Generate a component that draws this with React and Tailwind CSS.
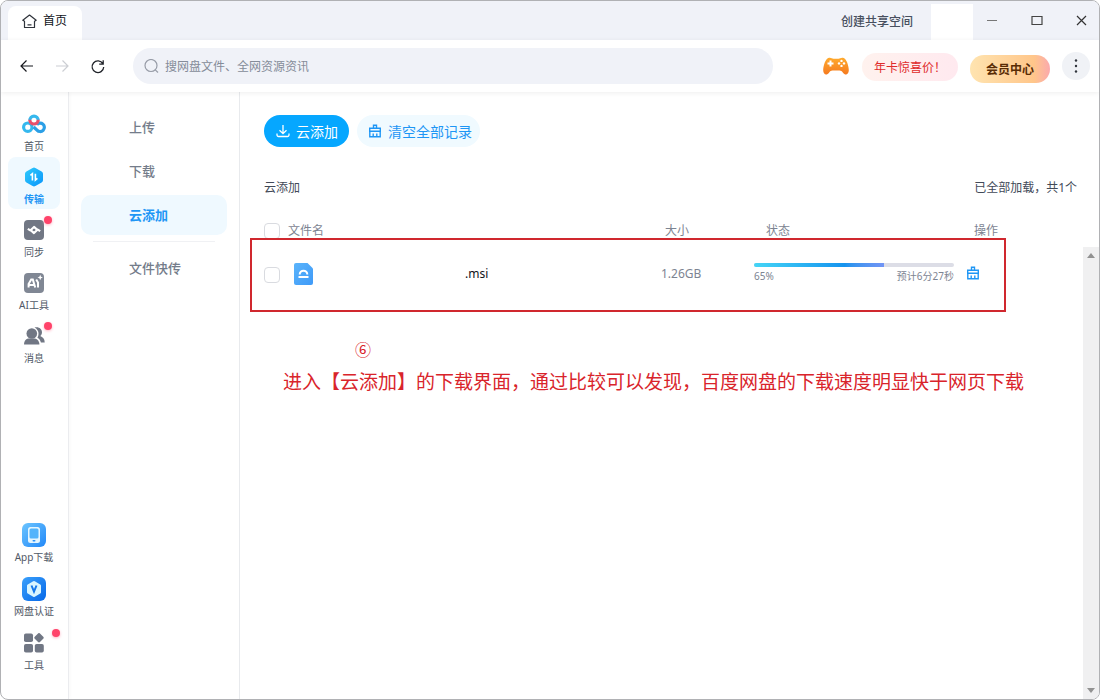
import React, { useState } from 'react';
import clsx from 'clsx';

const CloudLogo = () => (
  <svg width="24" height="20" viewBox="0 0 24 20" fill="none" strokeWidth="3.2">
    <circle cx="5.8" cy="13.2" r="4.2" stroke="#35b8ee" />
    <path d="M14.8 10.8A4.2 4.2 0 1 1 15 16.100L11.600 13" stroke="#2b9fe6" />
    <path d="M7.800 6.300A4.200 4.200 0 0 1 16.200 6.300" stroke="#35b8ee" />
    <path d="M7.800 5.800A4.200 4.200 0 1 0 16.200 5.800" stroke="#e8506c" />
  </svg>
);

const TransferIcon = () => (
  <svg width="20" height="20" viewBox="0 0 20 20" fill="none">
    <defs>
      <linearGradient id="hex" x1="0" y1="0" x2="1" y2="1"><stop stopColor="#2fcbfb" /><stop offset="1" stopColor="#0a95fb" /></linearGradient>
    </defs>
    <path d="M8.6.9a2.8 2.8 0 0 1 2.8 0l6.2 3.5A2.6 2.6 0 0 1 19 6.7v6.6a2.6 2.6 0 0 1-1.4 2.3l-6.2 3.5a2.8 2.8 0 0 1-2.8 0l-6.2-3.5A2.6 2.6 0 0 1 1 13.3V6.7a2.6 2.6 0 0 1 1.4-2.3z" fill="url(#hex)" />
    <path d="M6.400 8.300 8.400 6.700V13.400M11.400 6.700V13l2-1.600" stroke="#fff" strokeWidth="1.6" />
  </svg>
);

const SyncIcon = () => (
  <svg width="20" height="20" viewBox="0 0 20 20" fill="none">
    <rect width="20" height="20" rx="4" fill="#717784" />
    <path d="M3.800 8.800 6.300 10.400 10 6.900l3.300 3M16.200 11.200l-2.500-1.600L10 13.100l-3.300-3" stroke="#fff" strokeWidth="2.100" strokeLinejoin="round" />
  </svg>
);

const AiIcon = () => (
  <svg width="20" height="20" viewBox="0 0 20 20" fill="none">
    <rect width="20" height="20" rx="4" fill="#808794" />
    <path d="M4.600 14.500V11L7.200 6.500h1.600l2.400 8M5.500 12h5M12.200 6.500l1.800 3v5" stroke="#fff" strokeWidth="2" />
    <path d="m16.200 1.800.8 1.900 1.900.8-1.900.8-.8 1.900-.8-1.900-1.900-.8 1.900-.8z" fill="#fff" />
  </svg>
);

const PeopleIcon = () => (
  <svg width="22" height="20" viewBox="0 0 22 20" fill="#717784">
    <circle cx="8.800" cy="7.500" r="5.300" />
    <path d="M1 18.500c0-4 2.600-6 4.600-6h5.800c2 0 5 2 5 6z" />
    <path d="M11.500 1.600c4-1.300 7.500 1.100 7.500 4.600 0 1.800-.8 3-1.800 3.900 2.600 1 4.500 3 4.500 6.400h-3.800c-.5-2.200-1.800-3.800-3.500-4.700 1.600-2.500 2.200-7.500-2.900-10.200z" />
  </svg>
);

const PhoneIcon = () => (
  <svg width="24" height="24" viewBox="0 0 24 24" fill="none">
    <defs>
      <linearGradient id="phone" x1="0" y1="0" x2="1" y2="1"><stop stopColor="#6cc5ff" /><stop offset="1" stopColor="#2288f8" /></linearGradient>
    </defs>
    <rect width="24" height="24" rx="6" fill="url(#phone)" />
    <rect x="6" y="4" width="12" height="16" rx="2.5" fill="#e4f6ff" />
    <rect x="7.5" y="5.5" width="9" height="10" rx="1.500" fill="#52b4fb" />
    <rect x="10.500" y="17" width="3" height="1.500" rx=".7" fill="#2d91f8" />
  </svg>
);

const VerifyIcon = () => (
  <svg width="24" height="24" viewBox="0 0 24 24" fill="none">
    <defs>
      <linearGradient id="verify" x1="0" y1="0" x2="1" y2="1"><stop stopColor="#3aa0fb" /><stop offset="1" stopColor="#0668e8" /></linearGradient>
    </defs>
    <rect width="24" height="24" rx="6" fill="url(#verify)" />
    <path d="m12 5.500 5.500 3.200v6.600L12 18.500l-5.500-3.200V8.700z" fill="#d8f5ff" stroke="#d8f5ff" strokeWidth="3" strokeLinejoin="round" />
    <path d="m9.500 8.500 2.500 6.200 2.500-6.200" stroke="#1477ea" strokeWidth="2" />
  </svg>
);

const ToolsIcon = () => (
  <svg width="20" height="20" viewBox="0 0 20 20" fill="#717784">
    <rect x="0" y=".5" width="9" height="8.500" rx="1.800" />
    <rect x="11.300" y="1" width="7.400" height="7.400" rx="1.400" transform="rotate(45 15 4.700)" />
    <rect x="0" y="11" width="9" height="8.500" rx="1.800" />
    <rect x="10.800" y="11" width="9" height="8.500" rx="1.800" />
  </svg>
);

const GamepadIcon = () => (
  <svg width="26" height="18" viewBox="0 0 26 18" fill="none">
    <defs>
      <linearGradient id="pad" x1="0" y1="0" x2="0" y2="1"><stop stopColor="#ffab2e" /><stop offset="1" stopColor="#f57a20" /></linearGradient>
    </defs>
    <path d="M6 .8C8 .3 9 1.700 10.500 1.700h5C17 1.700 18 .3 20 .8c3.500.7 5.600 7.500 5.800 12.200.2 5-3.800 5.700-5.800 2.700-1-1.500-2-2.200-3.500-2.200h-7C8 13.500 7 14.200 6 15.700c-2 3-6 2.300-5.800-2.700C.4 8.300 2.500 1.500 6 .8z" fill="url(#pad)" />
    <path d="M7.500 3.500v6M4.500 6.500h6" stroke="#fff" strokeWidth="2" />
    <g fill="#fff"><circle cx="18.500" cy="3.900" r="1.200" /><circle cx="18.500" cy="8.900" r="1.200" /><circle cx="16" cy="6.400" r="1.200" /><circle cx="21" cy="6.400" r="1.200" /></g>
  </svg>
);

const BroomIcon = () => (
  <svg width="14" height="14" viewBox="0 0 14 14" fill="none" stroke="currentColor" strokeWidth="1.400">
    <path d="M5.500 4V1.200h3V4M1.700 7.300V4.200h10.600v3.100M1 7.300h12M1.800 7.300v5.400h10.400V7.300M5.200 9.500v3M8.800 9.500v3" />
  </svg>
);

const FileIcon = () => (
  <svg width="19" height="22" viewBox="0 0 19 22" fill="none">
    <defs>
      <linearGradient id="file" x1="0" y1="0" x2="1" y2="1"><stop stopColor="#5ab4fb" /><stop offset="1" stopColor="#3f9af8" /></linearGradient>
    </defs>
    <path d="M2 0h11.500L19 5.500V20a2 2 0 0 1-2 2H2a2 2 0 0 1-2-2V2a2 2 0 0 1 2-2z" fill="url(#file)" />
    <path d="M5.700 11.500a3.800 3.800 0 0 1 7.600 0" stroke="#fff" strokeWidth="2" />
    <path d="M4.500 14h10" stroke="#fff" strokeWidth="2" />
  </svg>
);

const mainItems = [
  { label: '首页', icon: CloudLogo },
  { label: '传输', icon: TransferIcon, active: true },
  { label: '同步', icon: SyncIcon, dot: true },
  { label: 'AI工具', icon: AiIcon },
  { label: '消息', icon: PeopleIcon, dot: true },
];

const bottomItems = [
  { label: 'App下载', icon: PhoneIcon },
  { label: '网盘认证', icon: VerifyIcon },
  { label: '工具', icon: ToolsIcon, dot: true, wide: true },
];

const tasks = [{ id: 1, name: '.msi', size: '1.26GB', progress: 65, eta: '预计6分27秒' }];

function SideItem({ item }) {
  const Icon = item.icon;
  return (
    <button className={clsx('relative flex h-[52px] w-[52px] flex-col items-center rounded-lg pt-2 text-[10px] leading-4 whitespace-nowrap', item.active ? 'bg-[#eff9ff] font-bold text-[#1e96f5]' : 'text-[#505866]')}>
      <span className="flex h-6 items-center"><Icon /></span>
      <span className="mt-0.5">{item.label}</span>
      {item.dot && <i className={clsx('absolute top-1.5 h-2 w-2 rounded-full bg-[#ff436a] shadow-[0_1px_3px_#ffb3c3]', item.wide ? 'right-0' : 'right-2')} />}
    </button>
  );
}

function TitleBar() {
  return (
    <header className="flex h-[39px] shrink-0 items-stretch bg-[#f0f2f8] pl-[7px] text-xs">
      <button className="mt-[5px] flex w-[74px] items-center gap-1.5 rounded-t-lg bg-white pb-1 pl-3.5 text-[#10131a]">
        <svg width="15" height="15" viewBox="0 0 15 15" fill="none" stroke="#30343c" strokeWidth="1.2" strokeLinejoin="round">
          <path d="M7.500 1 .8 6.300l1.700 1V13.500h10V7.300l1.700-1zM5.500 10.800h4" />
        </svg>
        首页
      </button>
      <button className="mr-[18px] ml-auto pt-0.5 font-medium text-[#48505f]">创建共享空间</button>
      <div className="mt-[3px] w-[42px] bg-white" />
      <div className="flex items-center pr-3 pl-3">
        <button aria-label="最小化" className="mr-8 flex h-4 w-3.5 items-center justify-center">
          <svg width="12" height="12" viewBox="0 0 12 12" stroke="#777" strokeWidth="1.200"><path d="M1 5.500h10" /></svg>
        </button>
        <button aria-label="最大化" className="mr-8 flex h-4 w-3 items-center justify-center">
          <svg width="12" height="12" viewBox="0 0 12 12" fill="none" stroke="#444" strokeWidth="1.200"><path d="M1 1.500h10v8H1z" /></svg>
        </button>
        <button aria-label="关闭" className="flex h-4 w-3 items-center justify-center">
          <svg width="11" height="11" viewBox="0 0 11 11" stroke="#333" strokeWidth="1.200"><path d="m1 1 9 9M10 1l-9 9" /></svg>
        </button>
      </div>
    </header>
  );
}

function Toolbar() {
  return (
    <div className="relative z-10 flex h-[52px] shrink-0 items-center bg-white pr-[9px] pl-[19px] text-xs shadow-[0_1px_5px_#00000012]">
      <button aria-label="后退" className="mr-[21px]">
        <svg width="14" height="14" viewBox="0 0 14 14" fill="none" stroke="#17191e" strokeWidth="1.200"><path d="M13 7H1M6.500 1.500 1 7l5.500 5.500" /></svg>
      </button>
      <button aria-label="前进" className="mr-[21px]">
        <svg width="14" height="14" viewBox="0 0 14 14" fill="none" stroke="#ccced3" strokeWidth="1.200"><path d="M1 7h12M7.500 1.500 13 7l-5.500 5.500" /></svg>
      </button>
      <button aria-label="刷新" className="mr-7">
        <svg width="15" height="15" viewBox="0 0 15 15" fill="none" stroke="#202329" strokeWidth="1.300"><path d="M12.900 4.800a5.800 5.800 0 1 0 .8 3.200M13.200 1.200v4H9.200" /></svg>
      </button>
      <label className="flex h-9 max-w-[640px] flex-1 items-center gap-1.5 rounded-full bg-[#f0f2f8] pl-[11px]">
        <svg width="15" height="15" viewBox="0 0 15 15" fill="none" stroke="#989da8" strokeWidth="1.200"><circle cx="7" cy="6.500" r="6" /><path d="m11.300 10.800 2.700 2.700" /></svg>
        <input type="text" aria-label="搜索" placeholder="搜网盘文件、全网资源资讯" className="min-w-0 flex-1 bg-transparent pt-0.5 outline-none placeholder:text-[#858c99]" />
      </label>
      <div className="ml-auto flex items-center gap-3">
        <button aria-label="游戏" className="pr-px"><GamepadIcon /></button>
        <button className="mt-0.5 h-7 w-24 rounded-full bg-linear-to-r from-[#fff2ee] to-[#ffe9ef] pt-0.5 pl-3 text-left text-[#e02b2b]">年卡惊喜价！</button>
        <button className="mt-1.5 h-7 w-20 rounded-full bg-linear-to-r from-[#ffe4b0] via-[#ffc68a] via-80% to-[#fba9ac] pt-0.5 font-bold text-[#592c05]">会员中心</button>
        <button aria-label="更多" className="flex h-7 w-7 items-center justify-center rounded-full bg-[#f0f2f6]">
          <svg width="4" height="16" viewBox="0 0 4 16" fill="#30343c"><circle cx="2" cy="2.500" r="1.200" /><circle cx="2" cy="8" r="1.200" /><circle cx="2" cy="13.500" r="1.200" /></svg>
        </button>
      </div>
    </div>
  );
}

function SubNav() {
  const item = 'h-10 rounded-[10px] pt-0.5 pl-12 text-left';
  return (
    <nav className="flex w-[171px] shrink-0 flex-col gap-1 border-r border-[#e8eaed] pt-[15px] pr-3 pl-3 text-[13px] font-medium text-[#747c8a]">
      <button className={item}>上传</button>
      <button className={item}>下载</button>
      <button className={clsx(item, 'bg-[#eff9ff] font-bold text-[#1e96f5]')}>云添加</button>
      <hr className="mx-3 my-[2px] border-[#f0f1f4]" />
      <button className={item}>文件快传</button>
    </nav>
  );
}

function TaskTable() {
  const [checked, setChecked] = useState([]);
  const box = 'block h-4 w-4 appearance-none rounded border border-[#d9dbe0] bg-white checked:bg-[#06a7ff]';
  const toggle = (id) => setChecked(checked.includes(id) ? checked.filter(c => c !== id) : [...checked, id]);

  return (
    <div className="relative">
      <table className="w-full table-fixed text-left text-xs text-[#7d8492]">
        <colgroup>
          <col className="w-6" />
          <col />
          <col className="w-[93px]" />
          <col className="w-[212px]" />
          <col className="w-10" />
        </colgroup>
        <thead>
          <tr className="h-5 [&>th]:font-normal">
            <th><input type="checkbox" aria-label="全选" className={box} checked={checked.length === tasks.length} onChange={() => setChecked(checked.length ? [] : tasks.map(t => t.id))} /></th>
            <th>文件名</th>
            <th className="pl-1">大小</th>
            <th className="pl-3">状态</th>
            <th className="pl-2 whitespace-nowrap">操作</th>
          </tr>
        </thead>
        <tbody>
          {tasks.map(t => (
            <tr key={t.id} className="h-[71px]">
              <td className="pb-1"><input type="checkbox" aria-label={t.name} className={box} checked={checked.includes(t.id)} onChange={() => toggle(t.id)} /></td>
              <td className="pb-1.5">
                <div className="flex items-center pl-1.5"><FileIcon /><span className="ml-[152px] text-[#10131a]">{t.name}</span></div>
              </td>
              <td className="pb-1.5">{t.size}</td>
              <td className="pr-3 pb-1.5">
                <div className="h-1 overflow-hidden rounded-full bg-[#dcdde6]">
                  <div className="h-full bg-linear-to-r from-[#45d5f6] via-[#1593ee] via-70% to-[#7194f5]" style={{ width: `${t.progress}%` }} />
                </div>
                <div className="mt-px flex justify-between text-[10px] leading-4"><span>{t.progress}%</span><span>{t.eta}</span></div>
              </td>
              <td className="pb-2"><button aria-label="清除" className="block text-[#1e96f5]"><BroomIcon /></button></td>
            </tr>
          ))}
        </tbody>
      </table>
      <div className="pointer-events-none absolute top-[17px] right-0 bottom-0 -left-3.5 border-2 border-[#d0282e]" />
    </div>
  );
}

export default function App() {
  return (
    <div className="flex h-screen flex-col overflow-hidden rounded-lg border border-[#b0b1b4] bg-white font-['Noto_Sans','Noto_Sans_CJK_SC',sans-serif]">
      <TitleBar />
      <Toolbar />
      <div className="flex min-h-0 flex-1">
        <aside className="flex w-[68px] shrink-0 flex-col justify-between border-r border-[#ebecef] pt-3 pb-6 pl-[7px] shadow-[1px_0_4px_#00000008]">
          <div className="flex flex-col gap-px">{mainItems.map(i => <SideItem key={i.label} item={i} />)}</div>
          <div className="flex flex-col gap-0.5">{bottomItems.map(i => <SideItem key={i.label} item={i} />)}</div>
        </aside>
        <SubNav />

        <main className="flex min-w-0 flex-1 flex-col">
          <div className="flex gap-2 px-6 pt-[23px] text-sm">
            <button className="flex h-8 items-center gap-1.5 rounded-full bg-[#06a7ff] pr-[11px] pl-3 text-white">
              <svg width="14" height="14" viewBox="0 0 14 14" fill="none" stroke="currentColor" strokeWidth="1.300"><path d="M7 1v8.500M3.500 6.200 7 9.700l3.500-3.500M1 9.500V11a1.500 1.500 0 0 0 1.500 1.500h9A1.500 1.500 0 0 0 13 11V9.500" /></svg>
              <span className="pt-0.5">云添加</span>
            </button>
            <button className="flex h-8 items-center gap-1.5 rounded-full bg-[#f0faff] pr-2 pl-[11px] text-[#1e96f5]"><BroomIcon /><span className="pt-0.5">清空全部记录</span></button>
          </div>
          <div className="mt-[31px] flex justify-between pr-[22px] pl-6 text-xs leading-5 text-[#424a58]"><h1>云添加</h1><span>已全部加载，共1个</span></div>

          <div className="mt-[23px] flex min-h-0 flex-1">
            <div className="min-w-0 flex-1 pl-6">
              <div className="mr-[77px]"><TaskTable /></div>
              <div className="pl-[19px] text-[#d9242b]">
                <p className="mt-7 pl-[72px] text-base leading-5">⑥</p>
                <p className="mt-2 text-[19px] leading-7 whitespace-nowrap">进入【云添加】的下载界面，通过比较可以发现，百度网盘的下载速度明显快于网页下载</p>
              </div>
            </div>
            <div className="mt-[26px] flex w-4 shrink-0 flex-col items-center justify-between bg-[#f0f0f1] py-1.5">
              <svg width="8" height="5" viewBox="0 0 8 5" fill="#929292"><path d="m4 0 4 5H0z" /></svg>
              <svg width="8" height="5" viewBox="0 0 8 5" fill="#929292"><path d="m4 5 4-5H0z" /></svg>
            </div>
          </div>
        </main>
      </div>
    </div>
  );
}
